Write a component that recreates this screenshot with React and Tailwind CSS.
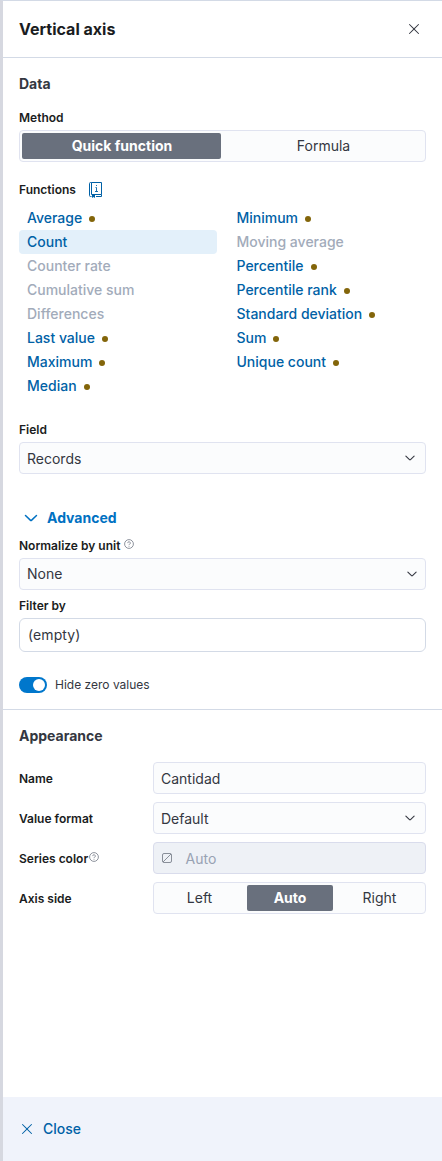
import React from "react";

const CROSS =
  "M7.293 8 3.146 3.854a.5.5 0 1 1 .708-.708L8 7.293l4.146-4.147a.5.5 0 0 1 .708.708L8.707 8l4.147 4.146a.5.5 0 0 1-.708.708L8 8.707l-4.146 4.147a.5.5 0 0 1-.708-.708L7.293 8Z";
const ARROW_DOWN =
  "M1.957 4.982a.75.75 0 0 1 1.06-.025l4.81 4.591a.25.25 0 0 0 .346 0l4.81-4.59a.75.75 0 0 1 1.035 1.084l-4.81 4.591a1.75 1.75 0 0 1-2.416 0l-4.81-4.59a.75.75 0 0 1-.025-1.06Z";

function Icon({ d, className }) {
  return (
    <svg viewBox="0 0 16 16" fill="currentColor" className={className} aria-hidden="true">
      <path d={d} />
    </svg>
  );
}

function HelpIcon({ className }) {
  return (
    <svg viewBox="0 0 10 10" fill="none" stroke="currentColor" strokeWidth="0.75" className={className} aria-hidden="true">
      <circle cx="5" cy="5" r="4.4" />
      <path d="M3.7 4.1a1.3 1.3 0 1 1 1.9 1.1c-.4.2-.6.4-.6.9" />
      <path d="M5 6.9v.8" />
    </svg>
  );
}

function DocsIcon({ className }) {
  return (
    <svg viewBox="0 0 16 16" fill="none" stroke="currentColor" className={className} aria-hidden="true">
      <path d="M3.500 .5h10v12h-10zM3.500 .5h-1a1 1 0 0 0-1 1v12a1 1 0 0 0 1 1h1M8 14.500h5.500v-2" />
      <path d="M7.500 5.500h1v4M7 9.500h3M8 3.500h1" strokeWidth="0.9" />
      <path d="M4 13h3v3l-1.500-1L4 16z" fill="currentColor" stroke="none" />
    </svg>
  );
}

function Label({ children }) {
  return <div className="flex h-4 items-center text-[12px] leading-4 font-semibold text-[#1a1c21]">{children}</div>;
}

function Select({ value, arrow, text = "pt-px" }) {
  return (
    <div className={`flex h-8 w-full items-center justify-between rounded-[4px] border border-[#e0e3f0] bg-[#fbfcfd] pl-[7px] ${arrow}`}>
      <span className={text}>{value}</span>
      <Icon d={ARROW_DOWN} className="h-3 w-3" />
    </div>
  );
}

const LEFT = [
  ["Average", "dot"],
  ["Count", "active"],
  ["Counter rate", "off"],
  ["Cumulative sum", "off"],
  ["Differences", "off"],
  ["Last value", "dot"],
  ["Maximum", "dot"],
  ["Median", "dot"],
];
const RIGHT = [
  ["Minimum", "dot"],
  ["Moving average", "off"],
  ["Percentile", "dot"],
  ["Percentile rank", "dot"],
  ["Standard deviation", "dot"],
  ["Sum", "dot"],
  ["Unique count", "dot"],
];

function FunctionList({ items }) {
  return (
    <ul>
      {items.map(([name, state]) => (
        <li
          key={name}
          className={`flex h-6 items-center rounded-[4px] pl-2 font-medium ${
            state === "off" ? "text-[#a2abba]" : "text-[#0061a6]"
          } ${state === "active" ? "bg-[#e3f0fa]" : ""}`}
        >
          {name}
          {state === "dot" && <span className="mt-[2px] ml-[7px] h-1.5 w-1.5 rounded-full bg-[#83650a]" />}
        </li>
      ))}
    </ul>
  );
}

export default function App() {
  return (
    <div className="flex h-[1161px] w-[442px] flex-col border-t border-l-[3px] border-t-[#d3dae6] border-l-[#d6d8e0] bg-white font-[Inter,sans-serif] text-[14px] leading-5 text-[#343741]">
      <header className="flex h-[57px] items-center justify-between border-b border-[#d3dae6] pr-5 pl-4">
        <h2 className="text-[16px] leading-6 font-bold text-[#1a1c21]">Vertical axis</h2>
        <Icon d={CROSS} className="h-4 w-4" />
      </header>

      <section className="flex h-[652px] flex-col border-b border-[#d3dae6] px-4 pt-4">
        <h3 className="font-bold">Data</h3>
        <div className="mt-4">
          <Label>Method</Label>
        </div>
        <div className="mt-1 grid h-8 grid-cols-[199px_204px] rounded-[4px] border border-[#e0e3f0] bg-[#fbfcfd] py-0.5 pl-0.5 text-center leading-[26px]">
          <span className="rounded-[2px] bg-[#69707d] pl-px font-bold text-white">Quick function</span>
          <span className="pl-px">Formula</span>
        </div>
        <div className="mt-5 flex h-4 items-center">
          <Label>Functions</Label>
          <DocsIcon className="ml-3 h-4 w-4 text-[#0061a6]" />
        </div>
        <div className="mt-2 grid h-48 grid-cols-[198px_198px] gap-x-[11.5px]">
          <FunctionList items={LEFT} />
          <FunctionList items={RIGHT} />
        </div>
        <div className="mt-6">
          <Label>Field</Label>
        </div>
        <div className="mt-1">
          <Select value="Records" arrow="pr-[9px]" text="pt-0.5" />
        </div>
        <div className="mt-8 flex h-6 items-center pl-1 font-bold text-[#0071c2]">
          <Icon d={ARROW_DOWN} className="mr-2 h-4 w-4" />
          Advanced
        </div>
        <div className="mt-2 flex">
          <Label>Normalize by unit</Label>
          <HelpIcon className="mt-px ml-1 h-2.5 w-2.5 text-[#69707d]" />
        </div>
        <div className="mt-1">
          <Select value="None" arrow="pr-[7px]" text="pt-0" />
        </div>
        <div className="mt-2">
          <Label>Filter by</Label>
        </div>
        <div className="mt-1 flex h-[34px] shrink-0 items-center rounded-[6px] border border-[#d3dae6] bg-white pl-2 tracking-[0.1px]">(empty)</div>
        <div className="mt-[25px] flex h-4 items-center">
          <span className="flex h-4 w-7 items-center justify-end rounded-full bg-[#0077cc] pr-0.5">
            <span className="h-3 w-3 rounded-full bg-white" />
          </span>
          <span className="ml-2 text-[12px] leading-4">Hide zero values</span>
        </div>
      </section>

      <section className="flex-1 px-4 pt-4">
        <h3 className="font-bold">Appearance</h3>
        <div className="mt-4 grid grid-cols-[134px_273px] items-center gap-y-2">
          <div className="pt-0.5">
            <Label>Name</Label>
          </div>
          <div className="flex h-8 items-center rounded-[4px] border border-[#e0e3f0] bg-[#fbfcfd] pt-px pl-[7px]">Cantidad</div>
          <div className="pt-0.5">
            <Label>Value format</Label>
          </div>
          <Select value="Default" arrow="pr-[9px]" text="pt-0.5" />
          <div className="flex pt-0.5">
            <Label>Series color</Label>
            <HelpIcon className="mt-px ml-px h-2.5 w-2.5 text-[#69707d]" />
          </div>
          <div className="flex h-8 items-center rounded-[4px] border border-[#d9dcec] bg-[#eef1f6] pl-2 text-[#98a2b3]">
            <svg viewBox="0 0 10 10" fill="none" stroke="#7d838f" strokeWidth="0.9" className="h-2.5 w-2.5" aria-hidden="true">
              <rect x="0.5" y="0.5" width="9" height="9" rx="1.5" />
              <path d="M1 9l8-8" />
            </svg>
            <span className="ml-[13.500px] pt-px">Auto</span>
          </div>
          <div className="pt-0.5">
            <Label>Axis side</Label>
          </div>
          <div className="grid h-8 grid-cols-[91px_86px_92px] rounded-[4px] border border-[#e0e3f0] bg-[#fbfcfd] py-0.5 pl-0.5 text-center leading-[26px]">
            <span className="pr-1">Left</span>
            <span className="rounded-[2px] bg-[#69707d] font-bold text-white">Auto</span>
            <span className="pl-px">Right</span>
          </div>
        </div>
      </section>

      <footer className="flex h-16 items-center bg-[#f0f3fb] pl-4 font-medium text-[#0061a6]">
        <Icon d={CROSS} className="mr-2 h-4 w-4" />
        Close
      </footer>
    </div>
  );
}
